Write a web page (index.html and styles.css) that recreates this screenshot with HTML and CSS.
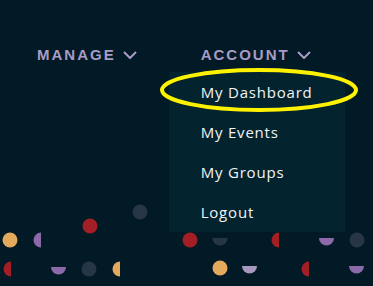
FILE: index.html
```html
<!DOCTYPE html>
<html lang="en">
<head>
    <meta charset="UTF-8">
    <meta name="viewport" content="width=device-width, initial-scale=1.0">
    <title>Account Menu</title>
    <link rel="stylesheet" href="styles.css">
</head>
<body>
    <svg class="confetti" width="373" height="286" viewBox="0 0 373 286">
        <circle cx="140" cy="212" r="7.5" fill="#263646"/>
        <circle cx="90" cy="226" r="7.5" fill="#a41e26"/>
        <circle cx="10" cy="240" r="7.5" fill="#e3aa5c"/>
        <path d="M41 232.5 A7.5 7.5 0 0 0 41 247.5 Z" fill="#8c6aaa"/>
        <path d="M11 261.5 A7.5 7.5 0 0 0 11 276.5 Z" fill="#a41e26"/>
        <path d="M51 267 A7.5 7.5 0 0 0 66 267 Z" fill="#8c6aaa"/>
        <circle cx="89" cy="269" r="7.5" fill="#263646"/>
        <path d="M120 261.5 A7.5 7.5 0 0 0 120 276.5 Z" fill="#e3aa5c"/>
        <circle cx="190" cy="240" r="7.5" fill="#a41e26"/>
        <path d="M212.5 238 A7.5 7.5 0 0 0 227.5 238 Z" fill="#263646"/>
        <path d="M279 232.5 A7.5 7.5 0 0 0 279 247.5 Z" fill="#a41e26"/>
        <path d="M319 238 A7.5 7.5 0 0 0 334 238 Z" fill="#8c6aaa"/>
        <circle cx="357" cy="240" r="7.5" fill="#263646"/>
        <circle cx="220" cy="268" r="7.5" fill="#e3aa5c"/>
        <path d="M242 266 A7.5 7.5 0 0 0 257 266 Z" fill="#a898c0"/>
        <path d="M309 261.5 A7.5 7.5 0 0 0 309 276.5 Z" fill="#a41e26"/>
        <path d="M349 266 A7.5 7.5 0 0 0 364 266 Z" fill="#8c6aaa"/>
    </svg>

    <header class="nav">
        <div class="nav-item">
            <span>MANAGE</span>
            <svg class="chevron" width="14" height="8" viewBox="0 0 14 8"><polyline points="1,1 7,7 13,1"/></svg>
        </div>
        <div class="nav-item account">
            <span>ACCOUNT</span>
            <svg class="chevron" width="14" height="8" viewBox="0 0 14 8"><polyline points="1,1 7,7 13,1"/></svg>
            <ul class="dropdown">
                <li class="current">My Dashboard</li>
                <li>My Events</li>
                <li>My Groups</li>
                <li>Logout</li>
            </ul>
        </div>
    </header>

    <svg class="highlight" width="373" height="286" viewBox="0 0 373 286">
        <ellipse cx="259" cy="90" rx="97" ry="20" fill="none" stroke="#fff200" stroke-width="4"/>
    </svg>
</body>
</html>
```

FILE: styles.css
```css
body {
    margin: 0;
    width: 373px;
    height: 286px;
    overflow: hidden;
    background: #021a26;
    position: relative;
}
.confetti {
    position: absolute;
    top: 0;
    left: 0;
}
.nav {
    position: relative;
    display: flex;
    gap: 64px;
    padding: 45px 0 0 37px;
}
.nav-item {
    position: relative;
    display: flex;
    align-items: center;
    gap: 7px;
    font-family: 'Liberation Sans', Arial, sans-serif;
    font-weight: bold;
    font-size: 15px;
    line-height: 20px;
    letter-spacing: 2px;
    color: #a99cc4;
    white-space: nowrap;
}
.chevron {
    margin-top: -1px;
}
.chevron polyline {
    fill: none;
    stroke: #a99cc4;
    stroke-width: 2;
}
.dropdown {
    position: absolute;
    top: 27px;
    left: -32px;
    width: 176px;
    margin: 0;
    padding: 0;
    list-style: none;
    background: #03232f;
}
.dropdown li {
    padding-left: 32px;
    font-family: 'Open Sans', sans-serif;
    font-weight: normal;
    font-size: 15px;
    line-height: 40px;
    letter-spacing: 0.8px;
    color: #f2f4f6;
}
.highlight {
    position: absolute;
    top: 0;
    left: 0;
    pointer-events: none;
}
```
